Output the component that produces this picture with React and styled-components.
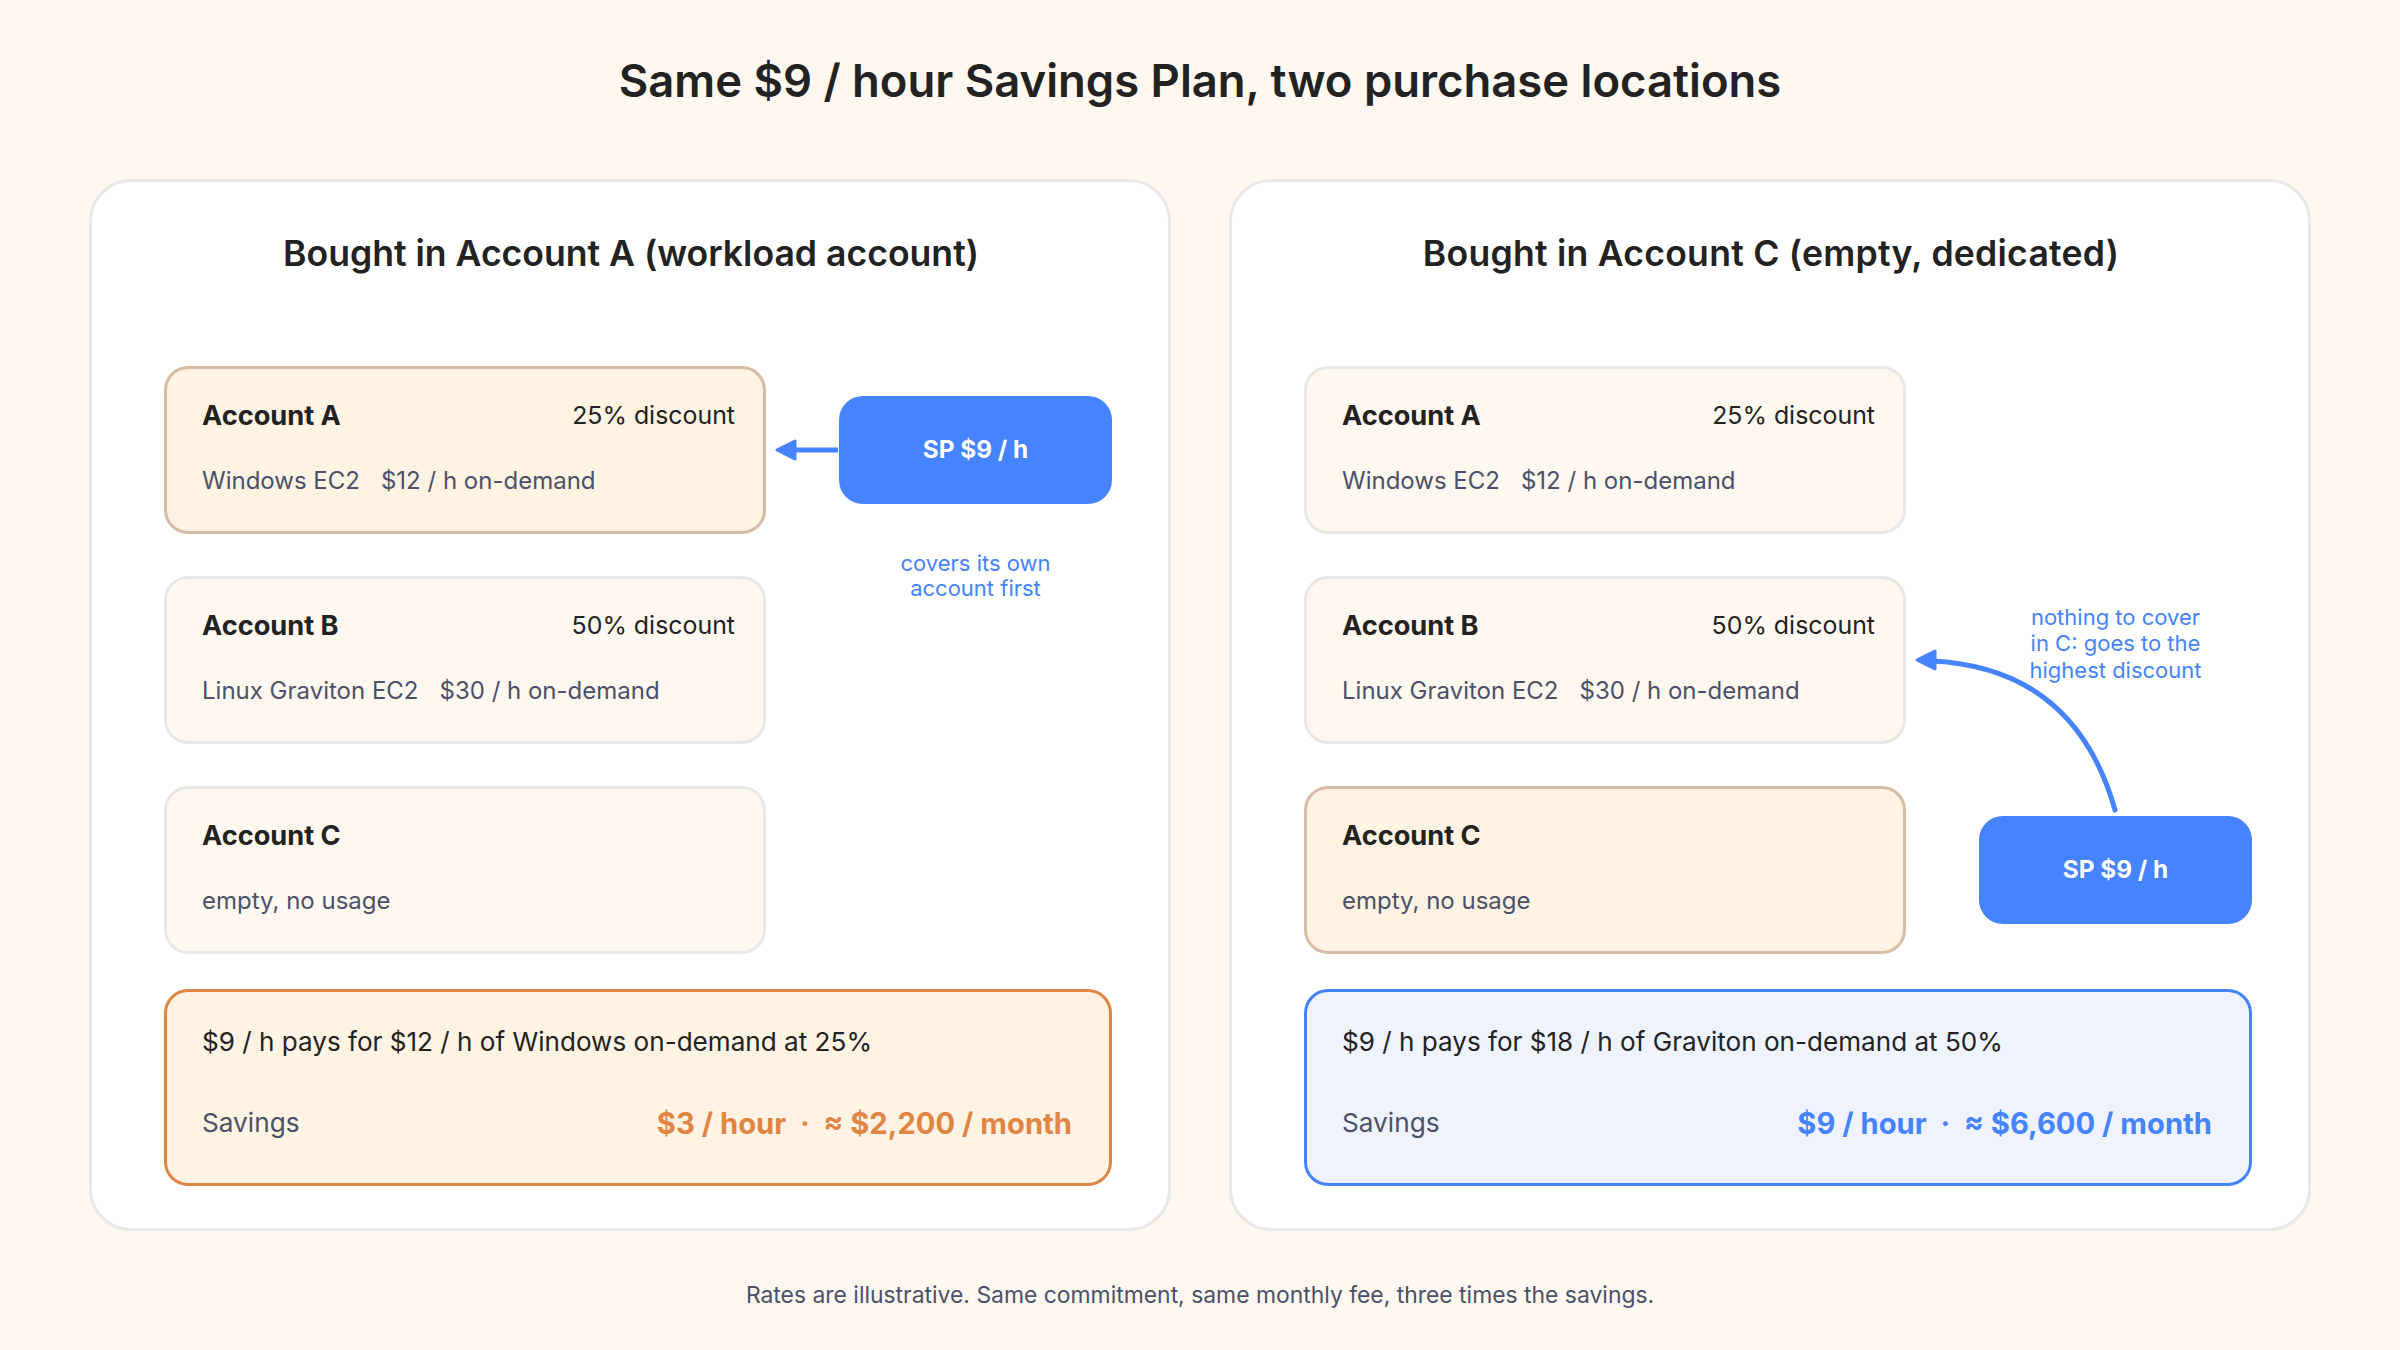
import React from "react";
import styled, { createGlobalStyle } from "styled-components";

const Global = createGlobalStyle`
  html, body { margin: 0; padding: 0; background: #fff8f0; }
  * { box-sizing: border-box; }
`;

const heading = `"Inter", "Liberation Sans", sans-serif`;
const body = `"Inter", "Liberation Sans", sans-serif`;
const blue = "#4583ff";
const grey = "#4a5168";

const Page = styled.div`
  width: 2400px;
  height: 1350px;
  padding: 0 89px;
  background: #fff8f0;
  font-family: ${body};
  color: #222;
  display: flex;
  flex-direction: column;
`;
const Title = styled.h1`
  margin: 0;
  height: 179px;
  padding-top: 52px;
  line-height: 58px;
  text-align: center;
  font-family: ${heading};
  font-size: 45.4px;
  font-weight: 600;
  color: #222;
`;
const Panels = styled.div`
  display: flex;
  gap: 58px;
`;
const Panel = styled.section`
  width: 1082px;
  height: 1052px;
  padding: 52px 56px 0 72px;
  background: #fff;
  border: 3px solid #e8e8e8;
  border-radius: 42px;
`;
const PanelTitle = styled.h2`
  margin: 0 0 92px;
  height: 40px;
  line-height: 40px;
  text-align: center;
  padding-right: 14px;
  font-family: ${heading};
  font-size: 35.6px;
  font-weight: 600;
  letter-spacing: ${(p) => p.$track || 0}px;
`;
const Diagram = styled.div`
  position: relative;
  display: grid;
  grid-template-columns: 602px 273px;
  column-gap: 73px;
`;
const Stack = styled.div`
  display: flex;
  flex-direction: column;
  gap: 42px;
`;
const Card = styled.div`
  height: 168px;
  padding: 28px 28px 0 35px;
  background: ${(p) => (p.$active ? "#fff3e3" : "#fff8f0")};
  border: 3px solid ${(p) => (p.$active ? "#d9bca6" : "#e8e8e8")};
  border-radius: 24px;
`;
const CardHead = styled.div`
  display: flex;
  justify-content: space-between;
  align-items: center;
  height: 36px;
`;
const CardName = styled.span`
  font-family: ${heading};
  font-size: 27.2px;
  font-weight: 700;
`;
const Discount = styled.span`
  font-size: 24.9px;
`;
const CardDetail = styled.div`
  display: flex;
  gap: 21px;
  margin-top: 30px;
  line-height: 36px;
  font-size: 24px;
  color: ${grey};
`;
const Side = styled.div`
  display: flex;
  flex-direction: column;
  padding-top: ${(p) => p.$top}px;
  gap: ${(p) => p.$gap}px;
`;
const PlanBox = styled.div`
  height: 108px;
  flex: none;
  padding-bottom: 2px;
  display: flex;
  align-items: center;
  justify-content: center;
  background: ${blue};
  border-radius: 24px;
  color: #fff;
  font-size: 24.4px;
  font-weight: 700;
`;
const Note = styled.div`
  text-align: center;
  color: ${blue};
  font-size: 22px;
  line-height: ${(p) => p.$lh}px;
`;
const Arrows = styled.svg`
  position: absolute;
  left: 0;
  top: 0;
  width: 948px;
  height: 588px;
  overflow: visible;
  pointer-events: none;
`;
const Result = styled.div`
  margin-top: 35px;
  height: 197px;
  padding: 32px 37px 0 35px;
  background: ${(p) => (p.$blue ? "#eef3fe" : "#fff3e3")};
  border: 3px solid ${(p) => (p.$blue ? blue : "#e08543")};
  border-radius: 24px;
`;
const ResultLine = styled.div`
  font-size: 26.1px;
  line-height: 36px;
`;
const SavingsRow = styled.div`
  display: flex;
  justify-content: space-between;
  align-items: center;
  margin-top: 44px;
  height: 36px;
`;
const SavingsLabel = styled.span`
  font-size: 26.2px;
  color: ${grey};
`;
const SavingsValue = styled.span`
  padding-top: 2px;
  font-family: ${heading};
  font-size: 29.2px;
  font-weight: 700;
  color: ${(p) => (p.$blue ? blue : "#e08543")};
`;
const Footer = styled.footer`
  margin-top: 49px;
  line-height: 30px;
  text-align: center;
  font-size: 22.9px;
  color: ${grey};
`;

const accounts = [
  { id: "A", discount: "25% discount", detail: ["Windows EC2", "$12 / h on-demand"] },
  { id: "B", discount: "50% discount", detail: ["Linux Graviton EC2", "$30 / h on-demand"] },
  { id: "C", discount: null, detail: ["empty, no usage"] },
];

function Cards({ active }) {
  return (
    <Stack>
      {accounts.map((a) => (
        <Card key={a.id} $active={a.id === active}>
          <CardHead>
            <CardName>Account {a.id}</CardName>
            {a.discount && <Discount>{a.discount}</Discount>}
          </CardHead>
          <CardDetail>
            {a.detail.map((d) => (
              <span key={d}>{d}</span>
            ))}
          </CardDetail>
        </Card>
      ))}
    </Stack>
  );
}

export default function App() {
  return (
    <Page>
      <Global />
      <Title>Same $9 / hour Savings Plan, two purchase locations</Title>
      <Panels>
        <Panel>
          <PanelTitle>Bought in Account A (workload account)</PanelTitle>
          <Diagram>
            <Cards active="A" />
            <Side $top={30} $gap={47}>
              <PlanBox>SP $9 / h</PlanBox>
              <Note $lh={24.5}>covers its own<br />account first</Note>
            </Side>
            <Arrows viewBox="0 0 948 588">
              <path d="M674 84 H628" stroke={blue} strokeWidth="5" fill="none" />
              <path d="M613 84 L631 75 V93 Z" fill={blue} stroke={blue} strokeWidth="3" strokeLinejoin="round" />
            </Arrows>
          </Diagram>
          <Result>
            <ResultLine>$9 / h pays for $12 / h of Windows on-demand at 25%</ResultLine>
            <SavingsRow>
              <SavingsLabel>Savings</SavingsLabel>
              <SavingsValue>$3 / hour &nbsp;·&nbsp; ≈ $2,200 / month</SavingsValue>
            </SavingsRow>
          </Result>
        </Panel>
        <Panel>
          <PanelTitle $track={0.24}>Bought in Account C (empty, dedicated)</PanelTitle>
          <Diagram>
            <Cards active="C" />
            <Side $top={237.5} $gap={133}>
              <Note $lh={26.5}>nothing to cover<br />in C: goes to the<br />highest discount</Note>
              <PlanBox>SP $9 / h</PlanBox>
            </Side>
            <Arrows viewBox="0 0 948 588">
              <path d="M811 444 Q771 302 628 295" stroke={blue} strokeWidth="5" strokeLinecap="round" fill="none" />
              <path d="M613 294 L631 285 V303 Z" fill={blue} stroke={blue} strokeWidth="3" strokeLinejoin="round" />
            </Arrows>
          </Diagram>
          <Result $blue>
            <ResultLine>$9 / h pays for $18 / h of Graviton on-demand at 50%</ResultLine>
            <SavingsRow>
              <SavingsLabel>Savings</SavingsLabel>
              <SavingsValue $blue>$9 / hour &nbsp;·&nbsp; ≈ $6,600 / month</SavingsValue>
            </SavingsRow>
          </Result>
        </Panel>
      </Panels>
      <Footer>Rates are illustrative. Same commitment, same monthly fee, three times the savings.</Footer>
    </Page>
  );
}
